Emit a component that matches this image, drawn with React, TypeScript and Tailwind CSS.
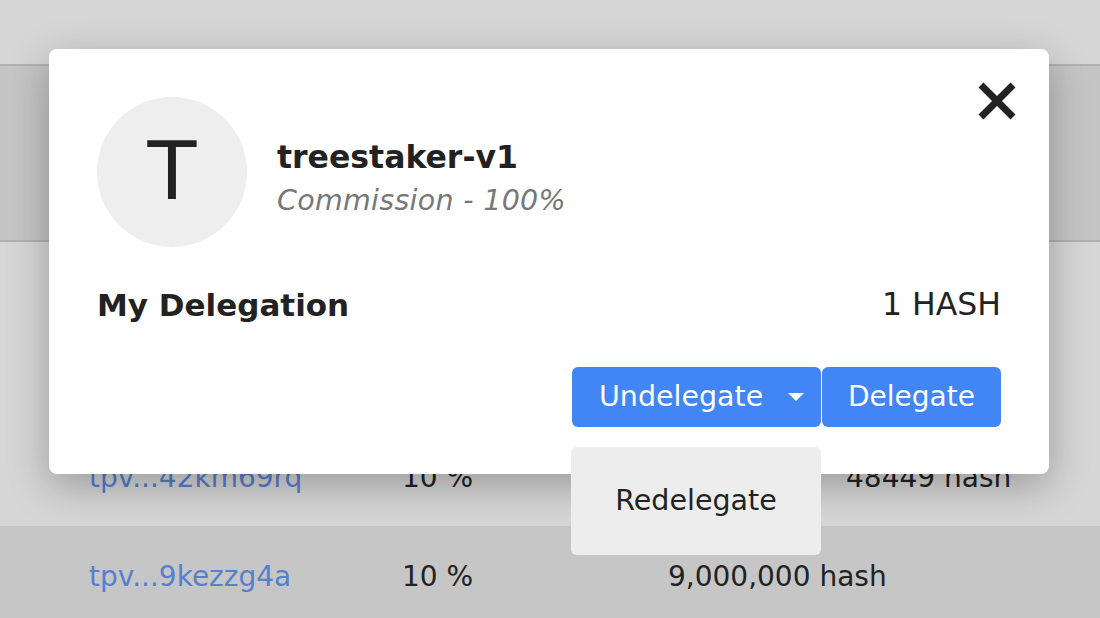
const font = "font-['DejaVu_Sans',sans-serif]";

const Caret = () => (
  <svg width="18" height="10" viewBox="0 0 18 10" className="ml-[24px]">
    <path d="M1 1 L17 1 L9 9 Z" fill="#fff" />
  </svg>
);

const CloseIcon = () => (
  <svg width="40" height="38" viewBox="0 0 40 38">
    <path d="M4 3 L36 35 M36 3 L4 35" stroke="#222" strokeWidth="7" />
  </svg>
);

const App = () => {
  return (
    <div className={`relative w-[1100px] h-[618px] overflow-hidden ${font} text-[#222]`}>
      {/* page behind the dialog */}
      <div className="flex flex-col h-full">
        <div className="h-[66px] bg-[#d6d6d6] border-b-2 border-[#b1b1b1]" />
        <div className="h-[176px] bg-[#c5c5c5] border-b-2 border-[#b1b1b1]" />
        <div className="h-[284px] bg-[#d6d6d6] flex items-end pb-[30px] pl-[89px] text-[28px] leading-[36px]">
          <span className="w-[313px] text-[#5680cf]">tpv...42km69rq</span>
          <span className="w-[444px]">10 %</span>
          <span>48449 hash</span>
        </div>
        <div className="flex-1 bg-[#c6c6c6] flex items-start pt-[33px] pl-[89px] text-[28px] leading-[36px]">
          <span className="w-[313px] text-[#5680cf]">tpv...9kezzg4a</span>
          <span className="w-[266px]">10 %</span>
          <span>9,000,000 hash</span>
        </div>
      </div>

      {/* dialog */}
      <div className="absolute inset-0 pt-[49px] pl-[49px]">
        <div className="relative w-[1000px] h-[425px] bg-white rounded-[8px] shadow-[0_12px_40px_rgba(0,0,0,0.28)] px-[48px] pt-[48px]">
          <button className="absolute top-[33px] right-[32px]">
            <CloseIcon />
          </button>

          <div className="flex items-start">
            <div className="w-[150px] h-[150px] rounded-full bg-[#eeeeee] flex items-center justify-center text-[80px] font-normal leading-none">
              T
            </div>
            <div className="ml-[30px] mt-[40px]">
              <div className="text-[31.5px] font-bold leading-[40px]">treestaker-v1</div>
              <div className="mt-[6px] text-[28.5px] tracking-[0.3px] italic leading-[36px] text-[#777]">Commission - 100%</div>
            </div>
          </div>

          <div className="flex justify-between items-center mt-[40px] h-[36px]">
            <span className="text-[31px] font-bold">My Delegation</span>
            <span className="text-[31.5px]">1 HASH</span>
          </div>

          <div className="flex justify-end mt-[44px] gap-[1px] text-white text-[28.5px]">
            <div className="relative">
              <button className="h-[60px] w-[249px] bg-[#4285f4] rounded-[6px] flex items-center pl-[27px]">
                Undelegate
                <Caret />
              </button>
              <div className="absolute left-[-1px] top-[80px] w-[250px] h-[108px] bg-[#ededed] rounded-[6px] flex items-center justify-center text-[#222]">
                Redelegate
              </div>
            </div>
            <button className="h-[60px] w-[179px] bg-[#4285f4] rounded-[6px] text-[28px]">Delegate</button>
          </div>
        </div>
      </div>
    </div>
  );
};

export default App;
